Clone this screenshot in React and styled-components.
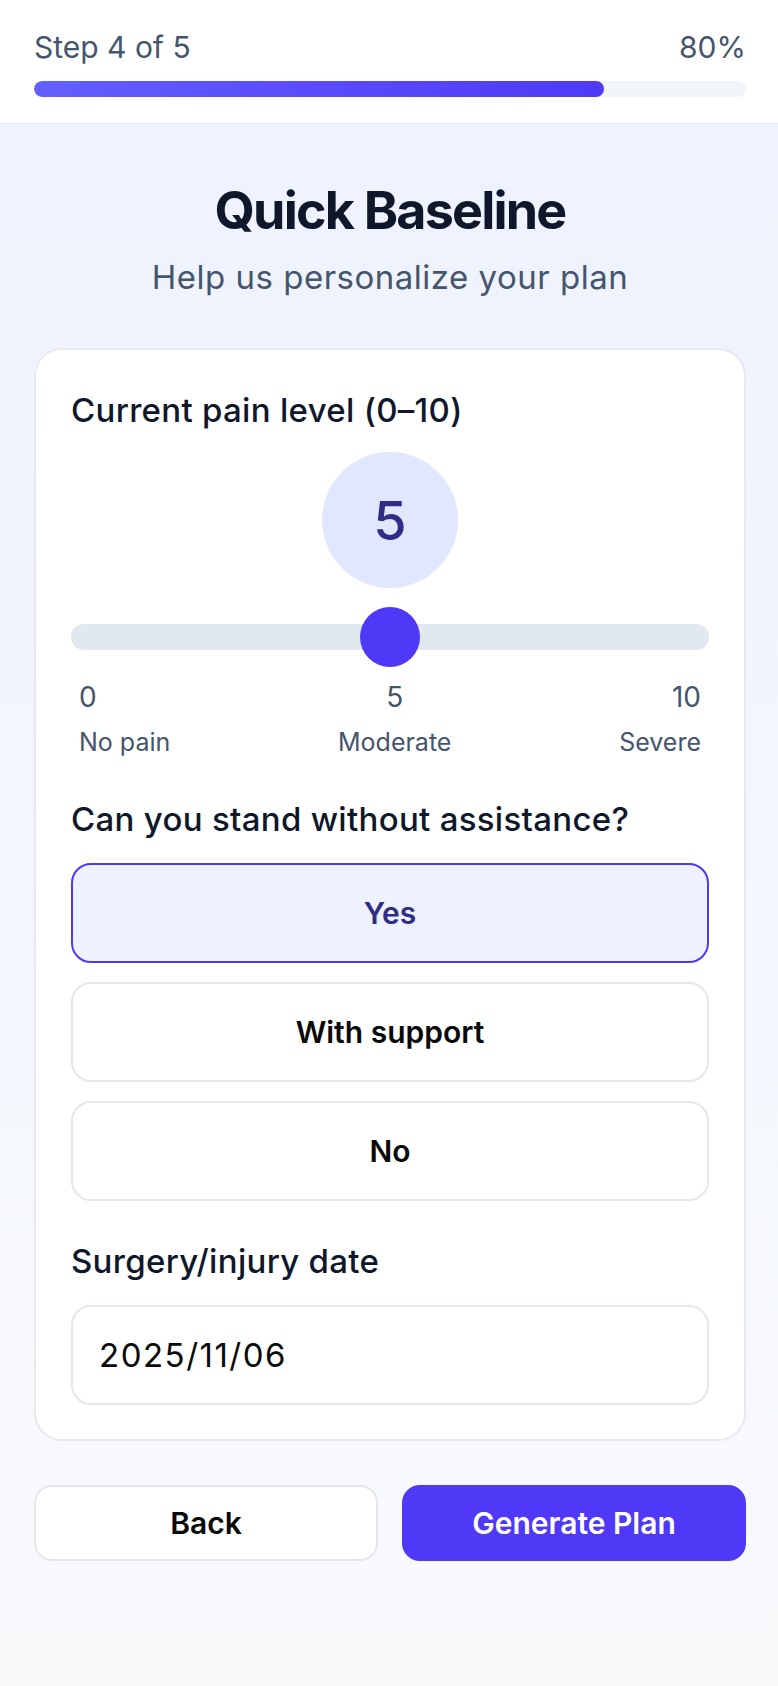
import React, { useState } from "react";
import styled, { createGlobalStyle } from "styled-components";

const GlobalStyle = createGlobalStyle`
  * { box-sizing: border-box; }
  html, body { margin: 0; padding: 0; }
  body {
    font-family: Inter, "Noto Sans", sans-serif;
    background: #f8fafc;
    -webkit-font-smoothing: antialiased;
  }
`;

const Page = styled.div`
  min-height: 100vh;
  display: flex;
  flex-direction: column;
  background: linear-gradient(180deg, #eef2ff 0%, #f8fafc 100%);
`;

// top bar with step counter + progress
const Header = styled.header`
  background: #ffffff;
  padding: 29px 32px 26px 34px;
  border-bottom: 1px solid #e2e8f0;
`;

const StepRow = styled.div`
  display: flex;
  justify-content: space-between;
  font-size: 30px;
  line-height: 36px;
  color: #45556c;
`;

const Track = styled.div`
  margin-top: 16px;
  height: 16px;
  border-radius: 999px;
  background: #f1f5f9;
  overflow: hidden;
`;

const Fill = styled.div`
  height: 100%;
  border-radius: 999px;
  background: linear-gradient(90deg, #625fff 0%, #4f39f6 100%);
`;

const Main = styled.main`
  flex: 1;
  padding: 56px 32px 60px 34px;
  display: flex;
  flex-direction: column;
`;

const Title = styled.h1`
  margin: 0;
  text-align: center;
  font-size: 52px;
  line-height: 62px;
  font-weight: 700;
  letter-spacing: -1.8px;
  color: #0f172b;
`;

const Subtitle = styled.p`
  margin: 15px 0 0;
  text-align: center;
  font-size: 33px;
  line-height: 40px;
  letter-spacing: 0.5px;
  color: #45556c;
`;

const Card = styled.section`
  margin-top: 51px;
  background: #ffffff;
  border: 2px solid #e7e9ee;
  border-radius: 28px;
  padding: 40px 35px 34px;
  display: flex;
  flex-direction: column;
`;

const Label = styled.div`
  font-size: 33px;
  line-height: 40px;
  font-weight: 500;
  letter-spacing: 0.3px;
  color: #0f172b;
  margin-top: ${({ $gap }) => $gap || 0}px;
`;

const Bubble = styled.div`
  align-self: center;
  margin-top: 22px;
  width: 136px;
  height: 136px;
  border-radius: 50%;
  background: #e0e7ff;
  display: flex;
  align-items: center;
  justify-content: center;
  font-size: 54px;
  font-weight: 500;
  color: #312c85;
`;

const SliderWrap = styled.div`
  position: relative;
  margin-top: 19px;
  height: 60px;
  display: flex;
  align-items: center;
`;

const SliderTrack = styled.div`
  width: 100%;
  height: 26px;
  border-radius: 999px;
  background: #e2e8f0;
`;

const Thumb = styled.div`
  position: absolute;
  top: 0;
  width: 60px;
  height: 60px;
  margin-left: -30px;
  border-radius: 50%;
  background: #4f39f6;
`;

const Scale = styled.div`
  margin-top: 13px;
  display: flex;
  justify-content: space-between;
`;

const ScaleCol = styled.div`
  padding: 0 8px;
  display: flex;
  flex-direction: column;
  text-align: ${({ $align }) => $align};
  color: #45556c;
`;

const ScaleNum = styled.span`
  font-size: 28px;
  line-height: 34px;
`;

const ScaleWord = styled.span`
  margin-top: 13px;
  font-size: 25px;
  line-height: 30px;
`;

const Options = styled.div`
  margin-top: 24px;
  display: flex;
  flex-direction: column;
  gap: 19px;
`;

const Option = styled.button`
  height: 100px;
  border-radius: 20px;
  border: 2px solid ${({ $active }) => ($active ? "#4f39f6" : "#e5e7eb")};
  background: ${({ $active }) => ($active ? "#eef2ff" : "#ffffff")};
  color: ${({ $active }) => ($active ? "#312c85" : "#0a0a0a")};
  font-family: inherit;
  font-size: 30px;
  font-weight: 600;
  cursor: pointer;
`;

const DateInput = styled.input`
  margin-top: 24px;
  height: 100px;
  width: 100%;
  border-radius: 20px;
  border: 2px solid #e2e8f0;
  padding: 0 26px;
  font-family: inherit;
  font-size: 33px;
  letter-spacing: 1.5px;
  color: #0a0a0a;
  background: #ffffff;
  outline: none;
`;

const Actions = styled.div`
  margin-top: 44px;
  display: flex;
  gap: 24px;
`;

const ActionButton = styled.button`
  flex: 1;
  height: 76px;
  border-radius: 18px;
  font-family: inherit;
  font-size: 30px;
  font-weight: 600;
  cursor: pointer;
  border: 2px solid ${({ $primary }) => ($primary ? "#4f39f6" : "#e5e7eb")};
  background: ${({ $primary }) => ($primary ? "#4f39f6" : "#ffffff")};
  color: ${({ $primary }) => ($primary ? "#ffffff" : "#0a0a0a")};
`;

const standOptions = ["Yes", "With support", "No"];

const App = () => {
  const [pain] = useState(5);
  const [stand, setStand] = useState("Yes");
  const progress = 80;

  return (
    <Page>
      <GlobalStyle />
      <Header>
        <StepRow>
          <span>Step 4 of 5</span>
          <span>{progress}%</span>
        </StepRow>
        <Track>
          <Fill style={{ width: `${progress}%` }} />
        </Track>
      </Header>
      <Main>
        <Title>Quick Baseline</Title>
        <Subtitle>Help us personalize your plan</Subtitle>
        <Card>
          <Label>Current pain level (0–10)</Label>
          <Bubble>{pain}</Bubble>
          <SliderWrap>
            <SliderTrack />
            <Thumb style={{ left: `${pain * 10}%` }} />
          </SliderWrap>
          <Scale>
            <ScaleCol $align="left">
              <ScaleNum>0</ScaleNum>
              <ScaleWord>No pain</ScaleWord>
            </ScaleCol>
            <ScaleCol $align="center">
              <ScaleNum>5</ScaleNum>
              <ScaleWord>Moderate</ScaleWord>
            </ScaleCol>
            <ScaleCol $align="right">
              <ScaleNum>10</ScaleNum>
              <ScaleWord>Severe</ScaleWord>
            </ScaleCol>
          </Scale>
          <Label $gap={42}>Can you stand without assistance?</Label>
          <Options>
            {standOptions.map((o) => (
              <Option key={o} $active={stand === o} onClick={() => setStand(o)}>
                {o}
              </Option>
            ))}
          </Options>
          <Label $gap={40}>Surgery/injury date</Label>
          <DateInput readOnly value="2025/11/06" />
        </Card>
        <Actions>
          <ActionButton>Back</ActionButton>
          <ActionButton $primary>Generate Plan</ActionButton>
        </Actions>
      </Main>
    </Page>
  );
};

export default App;
